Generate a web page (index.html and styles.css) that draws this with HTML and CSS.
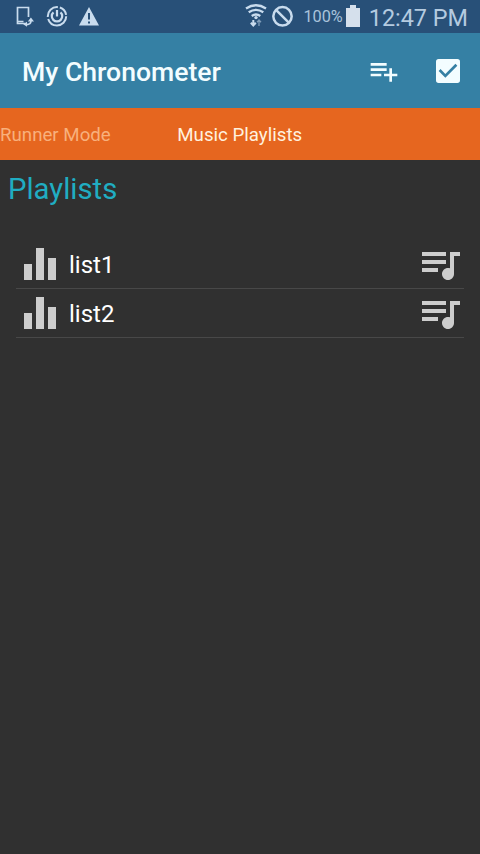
FILE: index.html
```html
<!DOCTYPE html>
<html lang="en">
<head>
<meta charset="utf-8">
<title>My Chronometer</title>
<link rel="stylesheet" href="styles.css">
</head>
<body>
<div class="status">
  <svg class="notices" width="86" height="24" viewBox="0 0 86 24">
    <g fill="none" stroke="currentColor" stroke-width="1.7">
      <path d="M13.500 13V3.500H2.500v16h8M2.500 17.500h6"/>
      <path d="M11 20.500c3.500.3 5-1.200 5-4"/>
      <circle cx="42" cy="12.300" r="9.200" stroke-width="2" stroke-dasharray="26 2 16 2 10 2"/>
      <path d="M38.500 8.400a5.200 5.200 0 1 0 7 0M42 6v6.500" stroke-width="2.200"/>
    </g>
    <path fill="currentColor" d="M12.800 17.500h6.200l-3.100-4zM12 17.700v5l-3.800-2.500zM74 3l10 18.500H64z"/>
    <path d="M74 9v6.500M74 17.500v2" stroke="#285078" stroke-width="2"/>
  </svg>
  <div class="system">
    <svg width="50" height="28" viewBox="0 0 50 28">
      <g fill="none" stroke="currentColor">
        <path stroke-width="2.300" d="M1 8.500q10-6.500 20 0M3.700 12.300q7.300-5 14.600 0M6.700 16q4.300-3 8.600 0"/>
        <path stroke-width="2" d="M8.300 20v5M5.800 22.800l2.500 2.700 2.500-2.700"/>
        <path opacity=".55" stroke-width="1.300" d="M14 26v-6M12 22.300l2-2.300 2 2.300"/>
        <circle cx="37.500" cy="16.300" r="9.200" stroke-width="2.500"/>
        <path stroke-width="2.500" d="M31 9.800l13 13"/>
      </g>
      <circle cx="11" cy="17.600" r="1.700" fill="currentColor"/>
    </svg>
    <span class="charge">100%</span>
    <svg class="battery" width="14" height="22" viewBox="0 0 14 22"><path fill="currentColor" d="M4 0h6v3h4v19H0V3h4z"/></svg>
    <span class="clock">12:47 PM</span>
  </div>
</div>
<header class="appbar">
  <h1>My Chronometer</h1>
  <svg width="32" height="32" viewBox="0 0 24 24"><path fill="currentColor" d="M14 10H2v2h12v-2zm0-4H2v2h12V6zm4 8v-4h-2v4h-4v2h4v4h2v-4h4v-2h-4zM2 16h8v-2H2v2z"/></svg>
  <svg width="32" height="32" viewBox="0 0 24 24"><path fill="currentColor" d="M19 3H5a2 2 0 0 0-2 2v14a2 2 0 0 0 2 2h14a2 2 0 0 0 2-2V5a2 2 0 0 0-2-2zm-9 14l-5-5 1.410-1.410L10 14.170l7.590-7.590L19 8l-9 9z"/></svg>
</header>
<nav class="tabs"><span class="tab previous">Runner Mode</span><span class="tab">Music Playlists</span></nav>
<main>
  <h2>Playlists</h2>
  <ul>
    <li>
      <svg width="48" height="48" viewBox="0 0 48 48"><path fill="currentColor" d="M8 24h8v16H8zM20 8h8v32h-8zM32 18h8v22h-8z"/></svg>
      <span class="name">list1</span>
      <svg width="48" height="48" viewBox="0 0 24 24"><path fill="currentColor" d="M15 6H3v2h12V6zm0 4H3v2h12v-2zM3 16h8v-2H3v2zM17 6v8.180c-.31-.11-.65-.18-1-.18-1.660 0-3 1.340-3 3s1.340 3 3 3 3-1.340 3-3V8h3V6h-5z"/></svg>
    </li>
    <li>
      <svg width="48" height="48" viewBox="0 0 48 48"><path fill="currentColor" d="M8 24h8v16H8zM20 8h8v32h-8zM32 18h8v22h-8z"/></svg>
      <span class="name">list2</span>
      <svg width="48" height="48" viewBox="0 0 24 24"><path fill="currentColor" d="M15 6H3v2h12V6zm0 4H3v2h12v-2zM3 16h8v-2H3v2zM17 6v8.180c-.31-.11-.65-.18-1-.18-1.660 0-3 1.340-3 3s1.340 3 3 3 3-1.340 3-3V8h3V6h-5z"/></svg>
    </li>
  </ul>
</main>
</body>
</html>
```
FILE: styles.css
```css
* { box-sizing: border-box; }
body {
  margin: 0;
  min-height: 854px;
  background: #303030;
  font-family: Roboto, sans-serif;
}
svg { display: block; flex: none; }
.status {
  height: 33px;
  display: flex;
  justify-content: space-between;
  align-items: flex-start;
  padding: 0 12px 0 15px;
  background: #285078;
  color: #c9dcee;
}
.notices { margin-top: 4px; }
.system { display: flex; align-items: flex-start; }
.charge {
  margin: 0 3px 0 8px;
  font-size: 16.3px;
  line-height: 34px;
  color: #a9c3db;
}
.battery { margin-top: 5px; color: #d5e0ec; }
.clock {
  margin-left: 9px;
  font-size: 23.4px;
  line-height: 36px;
  color: #b4cbe0;
}
.appbar {
  height: 75px;
  display: flex;
  align-items: center;
  gap: 32px;
  padding: 0 16px 0 22px;
  background: #3580a4;
  color: #f3fdff;
}
h1 {
  flex: 1;
  margin: 0;
  padding-top: 1px;
  font-size: 26.6px;
  font-weight: 500;
  white-space: nowrap;
}
.tabs {
  height: 52px;
  display: flex;
  align-items: center;
  gap: 66.5px;
  padding-top: 2px;
  background: #e6661f;
}
.tab { font-size: 18.7px; color: #fff1df; white-space: nowrap; }
.previous { color: #f8b07c; }
main { padding: 0 16px; }
h2 {
  margin: 0 0 0 -8px;
  height: 80px;
  font-size: 29.3px;
  line-height: 58px;
  font-weight: 400;
  color: #20adc2;
}
ul { margin: 0; padding: 0; list-style: none; }
li {
  height: 49px;
  display: flex;
  border-bottom: 1px solid #484848;
  color: #cdcdcd;
}
.name {
  flex: 1;
  padding-left: 5px;
  font-size: 24px;
  line-height: 51px;
  color: #fff;
}
```
